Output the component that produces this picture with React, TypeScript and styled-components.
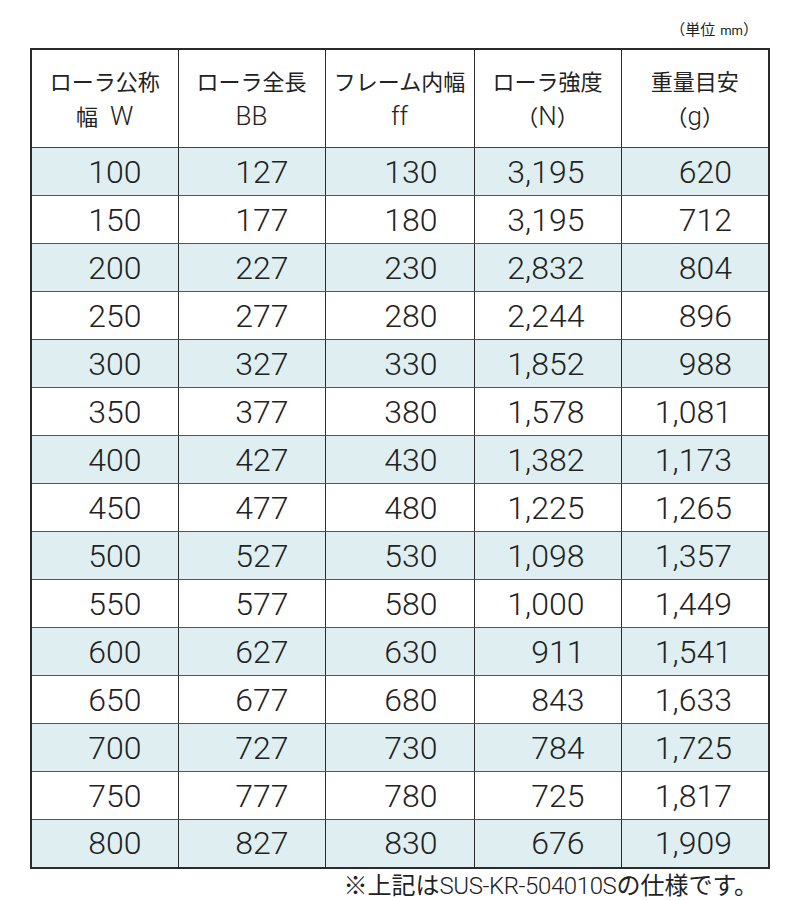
import { createGlobalStyle } from "styled-components";
import styled from "styled-components";

const GlobalStyle = createGlobalStyle`
  html, body {
    margin: 0;
    padding: 0;
    background: #fff;
  }
  body {
    font-family: Roboto, "Noto Sans CJK JP", sans-serif;
    color: #222;
  }
`;

const Page = styled.div`
  width: 800px;
  height: 900px;
  padding: 17px 0 0 30px;
  box-sizing: border-box;
`;

const Wrap = styled.div`
  width: 738px;
  display: flex;
  flex-direction: column;
`;

const Unit = styled.div`
  align-self: flex-end;
  margin-right: 10px;
  font-size: 15px;
  line-height: 24px;
  height: 31px;
  font-family: "Noto Sans CJK JP", sans-serif;
  small {
    font-family: Roboto, sans-serif;
    font-size: 13px;
    margin-left: 5px;
  }
`;

const Table = styled.table`
  width: 738px;
  border-collapse: collapse;
  border: 2px solid #2b2b2b;
  table-layout: fixed;
`;

const Head = styled.th`
  height: 97px;
  padding: 0;
  font-weight: 400;
  font-size: 22px;
  line-height: 35px;
  text-align: center;
  border-left: 1.5px solid #2b2b2b;
  border-bottom: 1px solid #444;
  font-family: "Noto Sans CJK JP", sans-serif;
  color: #222;
`;

const Latin = styled.span<{ $gap?: number }>`
  font-family: Roboto, sans-serif;
  font-weight: 300;
  font-size: 26px;
  margin-left: ${({ $gap }) => $gap ?? 0}px;
`;

const Row = styled.tr<{ $shade: boolean }>`
  height: 48px;
  background: ${({ $shade }) => ($shade ? "#dfeff1" : "#fff")};
`;

const Cell = styled.td`
  padding: 0 36px 0 0;
  text-align: right;
  font-size: 32px;
  font-weight: 300;
  line-height: 46px;
  border-left: 1.5px solid #2b2b2b;
  border-bottom: 1px solid #555;
`;

const Note = styled.div`
  align-self: flex-end;
  margin-right: 10px;
  margin-top: 0;
  font-size: 24px;
  line-height: 30px;
  font-family: "Noto Sans CJK JP", sans-serif;
  span {
    font-family: Roboto, sans-serif;
    font-weight: 300;
    font-size: 24px;
    letter-spacing: -0.4px;
  }
`;

const rows = [
  ["100", "127", "130", "3,195", "620"],
  ["150", "177", "180", "3,195", "712"],
  ["200", "227", "230", "2,832", "804"],
  ["250", "277", "280", "2,244", "896"],
  ["300", "327", "330", "1,852", "988"],
  ["350", "377", "380", "1,578", "1,081"],
  ["400", "427", "430", "1,382", "1,173"],
  ["450", "477", "480", "1,225", "1,265"],
  ["500", "527", "530", "1,098", "1,357"],
  ["550", "577", "580", "1,000", "1,449"],
  ["600", "627", "630", "911", "1,541"],
  ["650", "677", "680", "843", "1,633"],
  ["700", "727", "730", "784", "1,725"],
  ["750", "777", "780", "725", "1,817"],
  ["800", "827", "830", "676", "1,909"],
];

const widths = [147, 147, 149, 147, 148];

export default function App() {
  return (
    <>
      <GlobalStyle />
      <Page>
        <Wrap>
          <Unit>
            （単位<small>mm</small>）
          </Unit>
          <Table>
            <colgroup>
              {widths.map((w, i) => (
                <col key={i} style={{ width: w }} />
              ))}
            </colgroup>
            <thead>
              <tr>
                <Head>
                  ローラ公称
                  <br />幅<Latin $gap={12}>W</Latin>
                </Head>
                <Head>
                  ローラ全長
                  <br />
                  <Latin>BB</Latin>
                </Head>
                <Head>
                  フレーム内幅
                  <br />
                  <Latin>ff</Latin>
                </Head>
                <Head>
                  ローラ強度
                  <br />（<Latin>N</Latin>）
                </Head>
                <Head>
                  重量目安
                  <br />（<Latin>g</Latin>）
                </Head>
              </tr>
            </thead>
            <tbody>
              {rows.map((r, i) => (
                <Row key={r[0]} $shade={i % 2 === 0}>
                  {r.map((v, j) => (
                    <Cell key={j}>{v}</Cell>
                  ))}
                </Row>
              ))}
            </tbody>
          </Table>
          <Note>
            ※上記は<span>SUS-KR-504010S</span>の仕様です。
          </Note>
        </Wrap>
      </Page>
    </>
  );
}
